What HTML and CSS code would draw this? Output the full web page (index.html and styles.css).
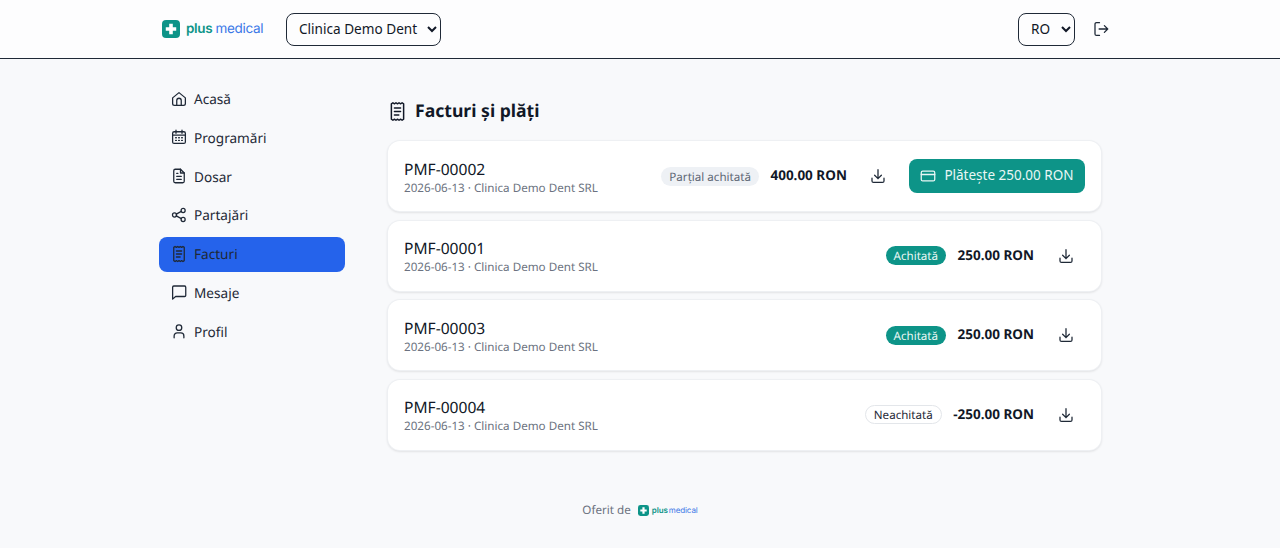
FILE: index.html
```html
<!DOCTYPE html>
<html lang="ro">
<head>
    <meta charset="UTF-8">
    <meta name="viewport" content="width=device-width, initial-scale=1.0">
    <title>Facturi și plăți</title>
    <link rel="stylesheet" href="styles.css">
</head>
<body>
    <svg class="icon-defs" width="0" height="0">
        <symbol id="i-receipt" viewBox="0 0 24 24">
            <path d="M5 3.200 6.750 2l1.750 1.200L10.250 2 12 3.200 13.750 2l1.750 1.200L17.250 2 19 3.200v17.600L17.250 22l-1.750-1.200L13.750 22 12 20.800 10.250 22 8.500 20.800 6.750 22 5 20.800z"/>
            <path d="M8.500 8h7M8.500 12h7M8.500 16h5"/>
        </symbol>
        <symbol id="i-download" viewBox="0 0 24 24">
            <path d="M12 3.500v12M7.500 11l4.500 4.500 4.500-4.500"/>
            <path d="M4 15v3.500A2 2 0 0 0 6 20.500h12a2 2 0 0 0 2-2V15"/>
        </symbol>
        <symbol id="i-logo" viewBox="0 0 20 20">
            <rect width="20" height="20" rx="4.500" fill="#0d9488"/>
            <path d="M8 4.200h4V8h3.800v4H12v3.800H8V12H4.200V8H8z" fill="#fff"/>
        </symbol>
    </svg>

    <header class="topbar">
        <div class="topbar-left">
            <div class="logo">
                <svg class="logo-mark"><use href="#i-logo"/></svg>
                <span class="logo-text"><b>plus</b><span>medical</span></span>
            </div>
            <select class="picker clinic-picker">
                <option>Clinica Demo Dent</option>
            </select>
        </div>
        <div class="topbar-right">
            <select class="picker lang-picker">
                <option>RO</option>
            </select>
            <svg class="icon logout" viewBox="0 0 24 24">
                <path d="M10 3.500H6a2 2 0 0 0-2 2v13a2 2 0 0 0 2 2h4"/>
                <path d="M9.500 12H21M16.500 7.500 21 12l-4.500 4.500"/>
            </svg>
        </div>
    </header>

    <div class="layout">
        <nav class="sidebar">
            <a class="nav-item">
                <svg class="icon" viewBox="0 0 24 24"><path d="M3.500 10.500 12 3.500l8.500 7V18a2.500 2.500 0 0 1-2.500 2.500H6A2.500 2.500 0 0 1 3.500 18z"/><path d="M9 20.500V14a3 3 0 0 1 6 0v6.500"/></svg>
                Acasă
            </a>
            <a class="nav-item">
                <svg class="icon" viewBox="0 0 24 24"><rect x="3.500" y="5" width="17" height="15.500" rx="2"/><path d="M3.500 9.500h17M8 3v4M16 3v4M7.500 13h1M11.500 13h1M15.500 13h1M7.500 16.500h1M11.500 16.500h1M15.500 16.500h1"/></svg>
                Programări
            </a>
            <a class="nav-item">
                <svg class="icon" viewBox="0 0 24 24"><path d="M14 3H7a2 2 0 0 0-2 2v14a2 2 0 0 0 2 2h10a2 2 0 0 0 2-2V8z"/><path d="M14 3v5h5M9 12.500h6M9 16.500h6M9 8.500h1.500"/></svg>
                Dosar
            </a>
            <a class="nav-item">
                <svg class="icon" viewBox="0 0 24 24"><circle cx="6" cy="12" r="2.700"/><circle cx="17.500" cy="6" r="2.700"/><circle cx="17.500" cy="18" r="2.700"/><path d="m8.400 10.800 6.700-3.600M8.400 13.200l6.700 3.600"/></svg>
                Partajări
            </a>
            <a class="nav-item active">
                <svg class="icon"><use href="#i-receipt"/></svg>
                Facturi
            </a>
            <a class="nav-item">
                <svg class="icon" viewBox="0 0 24 24"><path d="M5 4h14.500A1.500 1.500 0 0 1 21 5.500v11a1.500 1.500 0 0 1-1.500 1.500H7.500L3.500 21.500V5.500A1.500 1.500 0 0 1 5 4z"/></svg>
                Mesaje
            </a>
            <a class="nav-item">
                <svg class="icon" viewBox="0 0 24 24"><circle cx="12" cy="7.500" r="3.700"/><path d="M5.500 21v-2.500a4 4 0 0 1 4-4h5a4 4 0 0 1 4 4V21"/></svg>
                Profil
            </a>
        </nav>

        <main class="content">
            <h1 class="page-title">
                <svg class="icon title-icon"><use href="#i-receipt"/></svg>
                Facturi și plăți
            </h1>

            <div class="invoice-list">
                <div class="invoice-card">
                    <div class="invoice-info">
                        <div class="invoice-number">PMF-00002</div>
                        <div class="invoice-meta">2026-06-13 · Clinica Demo Dent SRL</div>
                    </div>
                    <div class="invoice-actions">
                        <span class="badge badge-partial">Parțial achitată</span>
                        <span class="amount">400.00 RON</span>
                        <span class="download"><svg class="icon"><use href="#i-download"/></svg></span>
                        <button class="pay-btn">
                            <svg class="icon" viewBox="0 0 24 24"><rect x="3" y="5.500" width="18" height="13" rx="2"/><path d="M3 10h18"/></svg>
                            <span class="pay-label">Plătește 250.00 RON</span>
                        </button>
                    </div>
                </div>

                <div class="invoice-card">
                    <div class="invoice-info">
                        <div class="invoice-number">PMF-00001</div>
                        <div class="invoice-meta">2026-06-13 · Clinica Demo Dent SRL</div>
                    </div>
                    <div class="invoice-actions">
                        <span class="badge badge-paid">Achitată</span>
                        <span class="amount">250.00 RON</span>
                        <span class="download"><svg class="icon"><use href="#i-download"/></svg></span>
                    </div>
                </div>

                <div class="invoice-card">
                    <div class="invoice-info">
                        <div class="invoice-number">PMF-00003</div>
                        <div class="invoice-meta">2026-06-13 · Clinica Demo Dent SRL</div>
                    </div>
                    <div class="invoice-actions">
                        <span class="badge badge-paid">Achitată</span>
                        <span class="amount">250.00 RON</span>
                        <span class="download"><svg class="icon"><use href="#i-download"/></svg></span>
                    </div>
                </div>

                <div class="invoice-card">
                    <div class="invoice-info">
                        <div class="invoice-number">PMF-00004</div>
                        <div class="invoice-meta">2026-06-13 · Clinica Demo Dent SRL</div>
                    </div>
                    <div class="invoice-actions">
                        <span class="badge badge-unpaid">Neachitată</span>
                        <span class="amount">-250.00 RON</span>
                        <span class="download"><svg class="icon"><use href="#i-download"/></svg></span>
                    </div>
                </div>
            </div>
        </main>
    </div>

    <footer class="footer">
        Oferit de
        <span class="logo logo-small">
            <svg class="logo-mark"><use href="#i-logo"/></svg>
            <span class="logo-text"><b>plus</b><span>medical</span></span>
        </span>
    </footer>
</body>
</html>
```

FILE: styles.css
```css
body {
    margin: 0;
    height: 548px;
    overflow: hidden;
    background-color: #f8f9fb;
    font-family: "Noto Sans", sans-serif;
    font-size: 13.6px;
    color: #111827;
    text-rendering: geometricPrecision;
}

.icon-defs {
    display: block;
    height: 0;
}

.icon {
    width: 18px;
    height: 18px;
    flex-shrink: 0;
    fill: none;
    stroke: currentColor;
    stroke-width: 1.7;
    stroke-linecap: round;
    stroke-linejoin: round;
}

/* Top bar */
.topbar {
    display: flex;
    justify-content: space-between;
    align-items: center;
    height: 58px;
    padding: 0 170px 0 162px;
    background-color: #fdfdfe;
    border-bottom: 1px solid #1f2937;
}

.topbar-left,
.topbar-right {
    display: flex;
    align-items: center;
}

.topbar-left {
    gap: 21px;
}

.topbar-right {
    gap: 17px;
}

.logo {
    display: flex;
    align-items: center;
    gap: 6px;
}

.topbar-left .logo {
    width: 103px;
}

.logo-mark {
    width: 18px;
    height: 18px;
}

.logo-text {
    font-family: Inter, sans-serif;
    font-size: 13.500px;
    letter-spacing: -0.3px;
    color: #3b78e7;
}

.logo-text b {
    margin-right: 3px;
    font-weight: 600;
    color: #0d9488;
}

.picker {
    height: 33px;
    padding: 0 4px 2px 8px;
    background-color: #fdfdfe;
    border: 1px solid #1f2937;
    border-radius: 8px;
    font-family: inherit;
    font-size: 13.6px;
    color: #111827;
}

.clinic-picker {
    width: 155px;
}

.lang-picker {
    width: 57px;
}

.logout {
    color: #1f2937;
}

/* Sidebar and content */
.layout {
    display: flex;
    padding: 0 179px 0 159px;
}

.sidebar {
    display: flex;
    flex-direction: column;
    gap: 3.800px;
    width: 186px;
    margin-top: 23px;
    margin-right: 43px;
}

.nav-item {
    display: flex;
    align-items: center;
    gap: 6.500px;
    box-sizing: border-box;
    height: 35px;
    padding: 0 10.500px 2px;
    border-radius: 8px;
    color: #1f2937;
}

.nav-item.active {
    background-color: #2563eb;
}

.content {
    flex: 1;
    padding-top: 40px;
}

.page-title {
    display: flex;
    align-items: center;
    gap: 7px;
    margin: 0 0 17px -1px;
    font-size: 17.6px;
    font-weight: 700;
    line-height: 25px;
}

.title-icon {
    width: 21px;
    height: 21px;
}

/* Invoices */
.invoice-list {
    display: flex;
    flex-direction: column;
    gap: 9.500px;
}

.invoice-card {
    display: flex;
    justify-content: space-between;
    align-items: center;
    height: 70px;
    padding: 0 16px;
    background-color: #fff;
    border-radius: 12px;
    box-shadow: 0 0 0 1px #eef0f3, 0 1px 3px rgba(0, 0, 0, 0.18);
}

.invoice-info {
    padding-top: 2px;
}

.invoice-number {
    margin-bottom: 1px;
    font-size: 15.6px;
    line-height: 22px;
}

.invoice-meta {
    font-size: 11.65px;
    line-height: 16px;
    color: #6b7280;
}

.invoice-actions {
    display: flex;
    align-items: center;
    gap: 11.500px;
}

.badge {
    padding: 3px 8px 1px;
    border-radius: 10px;
    font-size: 11.6px;
    line-height: 15px;
}

.badge-partial {
    background-color: #eef1f5;
    color: #5f6875;
}

.badge-paid {
    background-color: #0d9488;
    color: #e9f7f5;
}

.badge-unpaid {
    border: 1px solid #e3e6ea;
    padding: 2px 8px 0;
    color: #1f2937;
}

.amount {
    margin-right: 0.5px;
    padding-bottom: 2px;
    font-size: 13.5px;
    font-weight: 700;
    color: #111827;
}

.download {
    display: flex;
    justify-content: center;
    width: 39px;
    color: #1f2937;
}

.pay-btn {
    display: flex;
    align-items: center;
    gap: 7px;
    height: 34.500px;
    padding: 0 11.500px 0 10px;
    background-color: #0d9488;
    border: none;
    border-radius: 8px;
    font-family: inherit;
    font-size: 13.5px;
    color: #e9f7f5;
}

.pay-label {
    padding-bottom: 2px;
}

/* Footer */
.footer {
    display: flex;
    justify-content: center;
    align-items: center;
    gap: 7px;
    margin-top: 53px;
    font-size: 11.65px;
    color: #6b7280;
}

.logo-small {
    gap: 3px;
}

.logo-small .logo-mark {
    width: 11px;
    height: 11px;
}

.logo-small .logo-text {
    font-size: 8px;
    letter-spacing: -0.1px;
}

.logo-small .logo-text b {
    margin-right: 1px;
}
```
